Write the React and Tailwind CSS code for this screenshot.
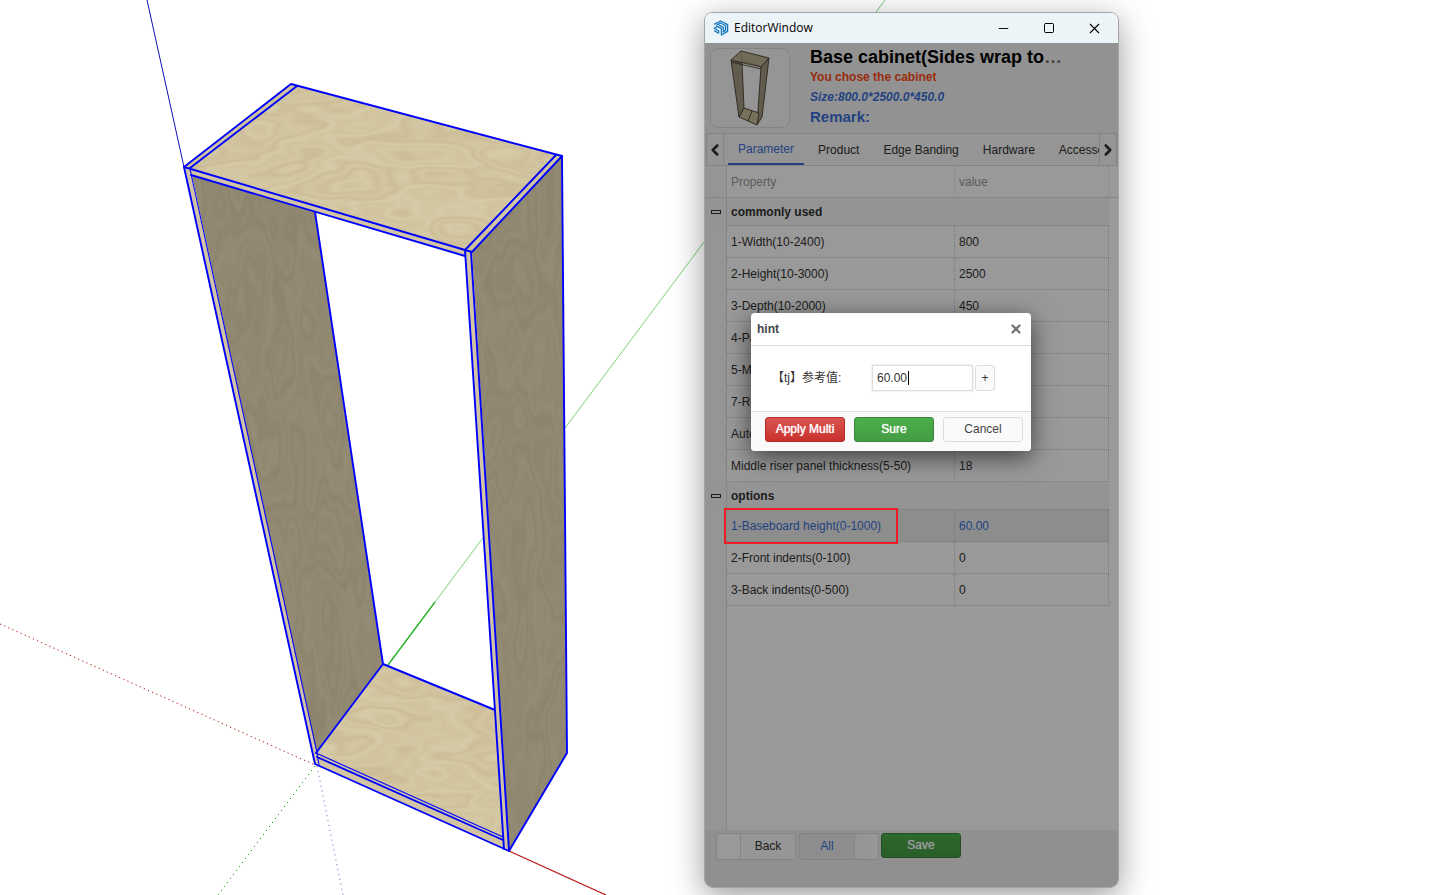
import React, { useState } from "react";
import { ChevronLeft, ChevronRight, Minus, Square, X } from "lucide-react";

const TABS = ["Parameter", "Product", "Edge Banding", "Hardware", "Accessories"];

const GROUPS = [
  {
    name: "commonly used",
    rows: [
      { label: "1-Width(10-2400)", value: "800" },
      { label: "2-Height(10-3000)", value: "2500" },
      { label: "3-Depth(10-2000)", value: "450" },
      { label: "4-Panel", value: "" },
      { label: "5-Mid", value: "" },
      { label: "7-Rear", value: "" },
      { label: "Auto", value: "" },
      { label: "Middle riser panel thickness(5-50)", value: "18" },
    ],
  },
  {
    name: "options",
    rows: [
      { label: "1-Baseboard height(0-1000)", value: "60.00", active: true },
      { label: "2-Front indents(0-100)", value: "0" },
      { label: "3-Back indents(0-500)", value: "0" },
    ],
  },
];

// 3D viewport: axes and the selected cabinet
function Viewport() {
  return (
    <svg className="absolute top-0 left-0" width="1450" height="895" viewBox="0 0 1450 895" fill="none" aria-hidden="true">
      <defs>
        <filter id="grain" x="0" y="0" width="100%" height="100%" colorInterpolationFilters="sRGB">
          <feTurbulence type="fractalNoise" baseFrequency="0.009 0.024" numOctaves="3" seed="8" />
          <feColorMatrix values="0 0 0 0 0.68  0 0 0 0 0.56  0 0 0 0 0.4  1 0 0 0 0" />
          <feComponentTransfer>
            <feFuncA type="table" tableValues="0 .2 .02 .14 0 .2 .06 .22 0 .14 .04 .24 0 .16 .02 .2 0" />
          </feComponentTransfer>
          <feComposite in2="SourceAlpha" operator="in" result="lines" />
          <feMerge>
            <feMergeNode in="SourceGraphic" />
            <feMergeNode in="lines" />
          </feMerge>
        </filter>
        <filter id="grainSide" x="0" y="0" width="100%" height="100%" colorInterpolationFilters="sRGB">
          <feTurbulence type="fractalNoise" baseFrequency="0.026 0.008" numOctaves="3" seed="3" />
          <feColorMatrix values="0 0 0 0 0.44  0 0 0 0 0.36  0 0 0 0 0.28  1 0 0 0 0" />
          <feComponentTransfer>
            <feFuncA type="table" tableValues="0 .14 .02 .1 0 .14 .04 .16 0 .1 .03 .16 0 .12 .02 .14 0" />
          </feComponentTransfer>
          <feComposite in2="SourceAlpha" operator="in" result="lines" />
          <feMerge>
            <feMergeNode in="SourceGraphic" />
            <feMergeNode in="lines" />
          </feMerge>
        </filter>
      </defs>

      {/* axes */}
      <path d="M147 0L184 167" stroke="#1010b0" />
      <path d="M885 0L435 602" stroke="#7ccf7c" />
      <path d="M435 602L388 665" stroke="#1fb01f" strokeWidth="1.3" />
      <path d="M315 766L218 895" stroke="#12a012" strokeDasharray="1.3 3.7" />
      <path d="M0 624L315 765" stroke="#c01414" strokeDasharray="1.3 3.2" />
      <path d="M509 851L606 895" stroke="#b81010" strokeWidth="1.2" />
      <path d="M317 766L343 895" stroke="#8080d8" strokeDasharray="1.3 3.7" />

      {/* panels */}
      <path d="M192 175L315 212L383 664L316 753Z" fill="#948c75" filter="url(#grainSide)" />
      <path d="M472 252L562 156L567 753L509 851Z" fill="#948c75" filter="url(#grainSide)" />
      <path d="M383 664L495 710L503 838L316 753Z" fill="#d6cba7" filter="url(#grain)" />
      <path d="M184 167L291 84L562 156L472 252L465 250Z" fill="#d6cba7" filter="url(#grain)" />
      <path d="M184 167L190 168L465 250L465 256L191 175L317 753L503 838L465 250L472 252L509 851L315 764Z" fill="#d3c5a4" />

      {/* selection edges */}
      <g stroke="#0000ff" strokeWidth="1.9" strokeLinejoin="round" strokeLinecap="round">
        <path d="M184 167L291 84L562 156L567 753L509 851L315 764Z" />
        <path d="M190 168L297 86M556 155L465 250M562 156L472 252M184 167L465 250L472 252" />
        <path d="M191 175L465 256M315 212L383 664M316 753L383 664L495 710" />
        <path d="M465 250L504 849M471 252L509 851M317 757L503 840" />
        <path d="M190 169L317 753L319 765M316 753L503 837" strokeWidth="1.1" />
      </g>
    </svg>
  );
}

function AppLogo() {
  return (
    <svg width="16" height="16" viewBox="0 0 16 16" fill="none" stroke="#1477bd" strokeWidth="1.3" strokeLinejoin="round" aria-hidden="true">
      <path d="M1.2 4.4L7.6 1L14.6 4.6V11.4L8.4 15V8.6L4.4 6.4L1.2 8.2L5.6 10.8V13.6" />
      <path d="M3.4 5.2L7.6 3L12.6 5.8V10.4L10.4 11.8V7.4L6 5" />
      <path d="M1.2 10.6L5.6 13.2" />
    </svg>
  );
}

function CabinetThumb() {
  return (
    <svg width="78" height="78" viewBox="0 0 78 78" stroke="#45402f" strokeWidth="0.9" strokeLinejoin="round" aria-hidden="true">
      <path d="M20 11L31 14L33 59L28 68Z" fill="#a29a80" />
      <path d="M58 9L50 18L46 76L51 68Z" fill="#a29a80" />
      <path d="M33 59L48 64L46 76L28 68Z" fill="#c6bb9b" />
      <path d="M41 62L37 72" />
      <path d="M20 11L30 2L58 9L50 18Z" fill="#bdb294" />
      <path d="M20 13L50 20" />
      <path d="M30 2L31 12L50 17" opacity="0.3" fill="none" />
    </svg>
  );
}

function ParameterTable() {
  return (
    <table className="w-full table-fixed border-separate border-spacing-0 text-left text-xs text-[#333]">
      <colgroup>
        <col className="w-[22px]" />
        <col className="w-[228px]" />
        <col />
        <col className="w-[9px]" />
      </colgroup>
      <thead>
        <tr className="h-8 text-[#999]">
          <th className="border-r border-b border-[#ddd] bg-[#f8f8f8]" />
          <th className="border-r border-b border-[#ddd] px-1 font-normal [border-right-style:dotted]">Property</th>
          <th className="border-r border-b border-[#ddd] px-1 font-normal [border-right-style:dotted]">value</th>
          <th className="border-b border-[#ddd]" />
        </tr>
      </thead>
      {GROUPS.map((group) => (
        <tbody key={group.name}>
          <tr className="h-7 bg-[#f7f7f7]">
            <td className="border-r border-[#ddd]">
              <button aria-label={`Collapse ${group.name}`} className="ml-1.5 block h-1 w-2.5 border border-[#333]" />
            </td>
            <th colSpan={2} className="border-b border-[#ddd] px-1 font-bold">{group.name}</th>
            <td className="bg-white" />
          </tr>
          {group.rows.map((row) => (
            <tr key={row.label} className={row.active ? "h-8 bg-[#ececec] text-[#3a6fd8]" : "h-8"}>
              <td className="border-r border-[#ddd] bg-[#f8f8f8]" />
              <td className="border-r border-b border-dotted border-[#ccc] px-1 whitespace-nowrap">
                {row.active ? (
                  <span className="relative">
                    {row.label}
                    <span className="absolute -top-[11px] -right-[17px] -bottom-[11px] -left-[7px] z-20 border-2 border-[#ee1c25]" />
                  </span>
                ) : (
                  row.label
                )}
              </td>
              <td className="border-r border-b border-dotted border-[#ccc] px-1">{row.value}</td>
              <td className="bg-white" />
            </tr>
          ))}
        </tbody>
      ))}
    </table>
  );
}

function HintDialog() {
  const [value, setValue] = useState("60.00");

  return (
    <div role="dialog" aria-label="hint" className="w-[280px] rounded-sm bg-white text-xs text-[#333] shadow-[0_6px_24px_rgba(0,0,0,0.6)]">
      <div className="flex h-8 items-center justify-between px-1.5 font-bold text-[#444]">
        <span>hint</span>
        <button aria-label="Close" className="mr-0.5 text-[#777]">
          <X size={14} strokeWidth={4} />
        </button>
      </div>
      <div className="flex h-[67px] items-center border-y border-[#ddd] pb-0.5 pl-[21px]">
        <label htmlFor="ref-value" className="w-[100px] font-['Liberation_Sans','Noto_Sans_CJK_SC',sans-serif]">【tj】参考值:</label>
        <div className="relative">
          <input
            id="ref-value"
            value={value}
            onChange={(e) => setValue(e.target.value)}
            className="block h-[26px] w-[101px] border border-[#ddd] bg-white px-1 text-xs shadow-[0_0_2px_rgba(0,0,0,0.15)] outline-none"
          />
          <span className="absolute top-1.5 left-9 h-3.5 w-px bg-black" />
        </div>
        <button className="ml-0.5 h-[26px] w-5 rounded-[3px] border border-[#ddd] bg-[#fafafa]">+</button>
      </div>
      <div className="flex h-[39px] gap-[9px] rounded-b-sm bg-[#fafafa] pt-[5px] pl-3.5">
        <button className="h-[25px] w-20 shrink-0 rounded-[3px] border border-[#b52b27] bg-linear-to-b from-[#d9534f] to-[#c9302c] pb-0.5 text-white [text-shadow:0_0_1px_#fff]">Apply Multi</button>
        <button className="h-[25px] w-20 shrink-0 rounded-[3px] border border-[#398439] bg-linear-to-b from-[#4cae4c] to-[#449d44] pb-0.5 text-white [text-shadow:0_0_1px_#fff]">Sure</button>
        <button className="h-[25px] w-20 shrink-0 rounded-[3px] border border-[#ddd] bg-[#fafafa] pb-0.5 text-[#444]">Cancel</button>
      </div>
    </div>
  );
}

function EditorWindow() {
  return (
    <section className="absolute top-3 bottom-[7px] left-[704px] flex w-[415px] flex-col overflow-hidden rounded-lg border border-[#a4a4a4] font-['Liberation_Sans',sans-serif] shadow-[0_8px_32px_rgba(0,0,0,0.4)]">
      <header className="flex h-[30px] shrink-0 items-center bg-[#ecf4f8] pr-px pl-2 font-['Open_Sans',sans-serif] text-xs text-black">
        <AppLogo />
        <span className="ml-[5px] flex-1">EditorWindow</span>
        <button aria-label="Minimize" className="flex w-[45px] justify-center"><Minus size={15} strokeWidth={1.5} /></button>
        <button aria-label="Maximize" className="flex w-[45px] justify-center"><Square size={12} strokeWidth={2} /></button>
        <button aria-label="Close window" className="flex w-[46px] justify-center"><X size={17} strokeWidth={1.5} /></button>
      </header>

      <div className="relative flex flex-1 flex-col bg-[#f4f4f4]">
        <div className="flex h-[90px] gap-5 px-[5px] pt-[5px]">
          <div className="h-20 w-20 rounded-lg border border-[#ddd] bg-[#f8f8f8]">
            <CabinetThumb />
          </div>
          <div className="font-bold text-[#3a6fd8]">
            <h1 className="text-lg leading-[19px] text-black">
              Base cabinet(Sides wrap to<span className="text-[#777]">…</span>
            </h1>
            <p className="text-xs leading-5 text-[#ff4a14]">You chose the cabinet</p>
            <p className="text-xs leading-5 italic">Size:800.0*2500.0*450.0</p>
            <p className="text-[15px] leading-[19px]">Remark:</p>
          </div>
        </div>

        <nav className="mx-px flex h-8 border border-b-0 border-[#ddd] bg-[#f8f8f8] text-xs text-[#333]">
          <button aria-label="Previous tabs" className="flex w-[17px] items-center justify-center border-r border-[#ddd]">
            <ChevronLeft size={18} strokeWidth={3.5} className="shrink-0" />
          </button>
          <div className="flex flex-1 overflow-hidden pl-1">
            {TABS.map((tab, i) => (
              <button key={tab} className={i === 0 ? "mr-0.5 border-b-2 border-[#3a6fd8] px-2.5 text-[#3a6fd8]" : "px-3 whitespace-nowrap"}>
                {tab}
              </button>
            ))}
          </div>
          <button aria-label="Next tabs" className="flex w-[17px] items-center justify-center border-l border-[#ddd]">
            <ChevronRight size={18} strokeWidth={3.5} className="shrink-0" />
          </button>
        </nav>

        <div className="flex flex-1 flex-col border-t border-[#ddd] bg-white">
          <ParameterTable />
          <div className="w-[22px] flex-1 border-r border-[#ddd] bg-[#f8f8f8]" />
        </div>

        <footer className="flex h-[57px] items-start bg-[#f0f0f0] pt-[3px] pl-[11px] text-xs text-[#333]">
          <button className="flex h-[27px] w-20 items-center rounded-[3px] border border-[#ddd] bg-[#fafafa]">
            <span className="h-full w-6 rounded-[3px] border-r border-[#ddd] bg-white" />
            <span className="flex-1 pb-0.5">Back</span>
          </button>
          <button className="ml-[3px] flex h-[27px] w-20 items-center rounded-[3px] border border-[#ddd] bg-[#ececec] text-[#3a6fd8]">
            <span className="flex-1 pb-0.5">All</span>
            <span className="h-full w-6 rounded-[3px] border-l border-[#ddd] bg-[#fafafa]" />
          </button>
          <button className="ml-0.5 h-[25px] w-20 rounded-[3px] border border-[#398439] bg-linear-to-b from-[#4cae4c] to-[#449d44] pb-0.5 text-white [text-shadow:0_0_1px_#fff]">Save</button>
        </footer>

        <div className="absolute inset-0 z-10 bg-black/40 pt-[270px] pl-[46px]">
          <HintDialog />
        </div>
      </div>
    </section>
  );
}

export default function App() {
  return (
    <main className="relative h-screen overflow-hidden bg-white">
      <Viewport />
      <EditorWindow />
    </main>
  );
}
